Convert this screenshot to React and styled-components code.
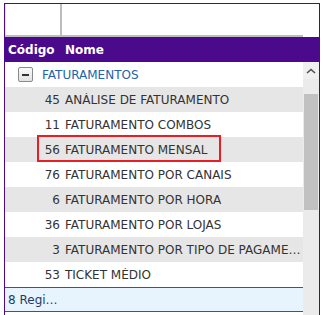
import React from 'react'
import styled, { createGlobalStyle } from "styled-components";

const GlobalStyle = createGlobalStyle`
  body {
    margin: 0;
    background: #ffffff;
    font-family: "DejaVu Sans", sans-serif;
  }
`;

const Page = styled.div`
  width: 323px;
  height: 315px;
  overflow: hidden;
  padding: 3px 0 0 4px;
  box-sizing: border-box;
`;

const Frame = styled.div`
  position: relative;
  width: 316px;
  height: 330px;
  border: 1px solid #4b0a8c;
  box-sizing: border-box;
  display: flex;
  flex-direction: column;
`;

const FilterRow = styled.div`
  display: flex;
  height: 33px;
  flex-shrink: 0;
`;

const FilterCells = styled.div`
  width: 298px;
  display: grid;
  grid-template-columns: 57px 1fr;
  border-bottom: 2px solid #bdbdbd;
  box-sizing: border-box;
`;

const FilterCell = styled.div`
  border-right: ${props => (props.divider ? "2px solid #bdbdbd" : "none")};
  border-left: ${props => (props.divider ? "1px solid #e4e4e4" : "none")};
`;

const HeaderRow = styled.div`
  display: grid;
  grid-template-columns: 57px 1fr;
  height: 25px;
  flex-shrink: 0;
  background: #4b0a8c;
  color: #ffffff;
  font-size: 12px;
  font-weight: bold;
  align-items: center;
`;

const HeaderCell = styled.div`
  padding-left: ${props => props.pad}px;
`;

const Body = styled.div`
  display: flex;
  flex: 1;
  min-height: 0;
`;

const List = styled.div`
  width: 298px;
  display: flex;
  flex-direction: column;
`;

const GroupRow = styled.div`
  display: flex;
  align-items: center;
  height: 25px;
  padding-left: 13px;
  color: #2563a8;
  font-size: 12px;
`;

const Toggle = styled.div`
  width: 13px;
  height: 13px;
  border: 1px solid #8a8a8a;
  border-radius: 2px;
  background: linear-gradient(#fafafa, #e2e2e2);
  display: flex;
  align-items: center;
  justify-content: center;
  margin-right: 9px;

  &::after {
    content: "";
    width: 7px;
    height: 2px;
    background: #333333;
  }
`;

const Row = styled.div`
  display: grid;
  grid-template-columns: 57px 1fr;
  height: 25px;
  align-items: center;
  background: ${props => (props.striped ? "#e6e6e6" : "#ffffff")};
  color: #333333;
  font-size: 12px;
`;

const Code = styled.div`
  text-align: right;
  padding-right: 2px;
`;

const Name = styled.div`
  padding-left: 3px;
  padding-right: 1px;
  white-space: nowrap;
  overflow: hidden;
  text-overflow: ellipsis;
`;

const Footer = styled.div`
  height: 23px;
  display: flex;
  align-items: center;
  background: #e8f4fd;
  border-top: 1px solid #1f5f9f;
  border-bottom: 1px solid #1f5f9f;
  color: #1d3c66;
  font-size: 12px;
`;

const FooterText = styled.div`
  width: 54px;
  padding-left: 3px;
  white-space: nowrap;
  overflow: hidden;
  text-overflow: ellipsis;
`;

const ScrollBar = styled.div`
  width: 16px;
  background: #ebebeb;
  display: flex;
  flex-direction: column;
  align-items: center;
`;

const ArrowButton = styled.div`
  width: 16px;
  height: 17px;
  background: #f0f0f0;
  display: flex;
  align-items: center;
  justify-content: center;
`;

const Thumb = styled.div`
  width: 14px;
  height: 116px;
  margin-top: 15px;
  background: #c1c1c1;
`;

const Highlight = styled.div`
  position: absolute;
  left: 32px;
  top: 131px;
  width: 184px;
  height: 27px;
  border: 2px solid #e81e25;
  box-sizing: border-box;
  pointer-events: none;
`;

const items = [
  ["45", "ANÁLISE DE FATURAMENTO"],
  ["11", "FATURAMENTO COMBOS"],
  ["56", "FATURAMENTO MENSAL"],
  ["76", "FATURAMENTO POR CANAIS"],
  ["6", "FATURAMENTO POR HORA"],
  ["36", "FATURAMENTO POR LOJAS"],
  ["3", "FATURAMENTO POR TIPO DE PAGAMENTO"],
  ["53", "TICKET MÉDIO"],
];

function App() {
  return (
    <Page>
      <GlobalStyle />
      <Frame>
        <FilterRow>
          <FilterCells>
            <FilterCell divider />
            <FilterCell />
          </FilterCells>
        </FilterRow>
        <HeaderRow>
          <HeaderCell pad={3}>Código</HeaderCell>
          <HeaderCell pad={3}>Nome</HeaderCell>
        </HeaderRow>
        <Body>
          <List>
            <GroupRow>
              <Toggle />
              FATURAMENTOS
            </GroupRow>
            {items.map(([code, name], i) => (
              <Row key={code} striped={i % 2 === 0}>
                <Code>{code}</Code>
                <Name>{name}</Name>
              </Row>
            ))}
            <Footer>
              <FooterText>8 Registros</FooterText>
            </Footer>
          </List>
          <ScrollBar>
            <ArrowButton>
              <svg width="10" height="6" viewBox="0 0 10 6">
                <path d="M1 5 L5 1.5 L9 5" fill="none" stroke="#505050" strokeWidth="1.6" />
              </svg>
            </ArrowButton>
            <Thumb />
          </ScrollBar>
        </Body>
        <Highlight />
      </Frame>
    </Page>
  );
}

export default App
